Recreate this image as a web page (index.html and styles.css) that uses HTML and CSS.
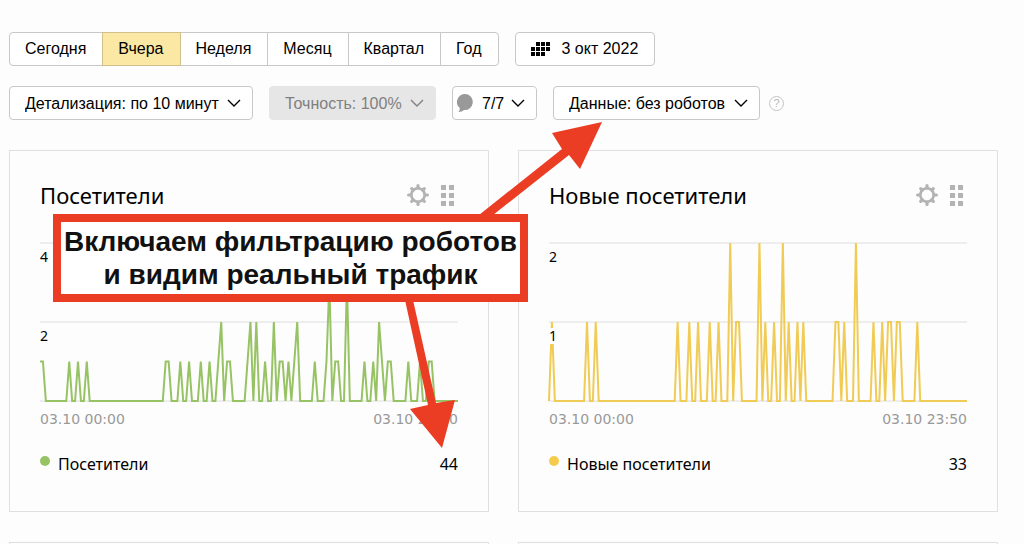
FILE: index.html
```html
<!DOCTYPE html>
<html lang="ru">
  <head>
    <meta charset="UTF-8" />
    <meta name="viewport" content="width=device-width, initial-scale=1.0" />
    <title>Посетители</title>
    <link rel="stylesheet" href="styles.css">
  </head>
  <body>
    <svg class="sprite" width="0" height="0" aria-hidden="true">
      <symbol id="gear" viewBox="0 0 22 22">
        <circle cx="11" cy="11" r="6.7" fill="none" stroke="currentColor" stroke-width="2.6" />
        <path d="M11 1.6V4M11 18v2.400M1.600 11H4M18 11h2.400M4.700 4.700l1.500 1.500M15.800 15.800l1.500 1.500M4.700 17.300l1.500-1.500M15.800 6.200l1.500-1.500" fill="none" stroke="currentColor" stroke-width="3.200" stroke-linecap="round" />
      </symbol>
      <symbol id="grip" viewBox="0 0 13 21">
        <path d="M0 0h5v5H0zM8 0h5v5H8zM0 8h5v5H0zM8 8h5v5H8zM0 16h5v5H0zM8 16h5v5H8z" fill="currentColor" />
      </symbol>
    </svg>

    <main class="page">
      <div class="toolbar">
        <div class="periods">
          <button type="button">Сегодня</button>
          <button type="button" class="active">Вчера</button>
          <button type="button">Неделя</button>
          <button type="button">Месяц</button>
          <button type="button">Квартал</button>
          <button type="button">Год</button>
        </div>
        <button type="button" class="date-btn">
          <svg width="19" height="14" viewBox="0 0 19 14" aria-hidden="true">
            <path d="M5 0h4v4H5zM10 0h4v4h-4zM15 0h4v4h-4zM0 5h4v4H0zM5 5h4v4H5zM10 5h4v4h-4zM15 5h4v4h-4zM0 10h4v4H0zM5 10h4v4H5zM10 10h4v4h-4z" />
          </svg>
          3 окт 2022
        </button>
      </div>

      <div class="toolbar">
        <select class="dropdown" aria-label="Детализация">
          <option>Детализация: по 10 минут</option>
        </select>
        <select class="dropdown" aria-label="Точность" disabled>
          <option>Точность: 100%</option>
        </select>
        <label class="notes">
          <svg width="17" height="18" viewBox="0 0 17 18" aria-hidden="true">
            <path d="M8.500 0a8 8 0 1 1-1.500 16Q5 17.800 1.500 18 3 16.500 2.700 14A8 8 0 0 1 8.500 0z" />
          </svg>
          <select class="dropdown" aria-label="Примечания">
            <option>7/7</option>
          </select>
        </label>
        <select class="dropdown" aria-label="Данные">
          <option>Данные: без роботов</option>
        </select>
        <button type="button" class="help">?</button>
      </div>

      <div class="cards">
        <section class="card">
          <header class="card-header">
            <h2>Посетители</h2>
            <button type="button" class="icon-btn" aria-label="Настройки"><svg width="22" height="22"><use href="#gear" /></svg></button>
            <button type="button" class="icon-btn" aria-label="Переместить"><svg width="13" height="21"><use href="#grip" /></svg></button>
          </header>
          <div class="chart">
            <svg class="plot green" viewBox="0 0 143 4" preserveAspectRatio="none" aria-hidden="true">
              <path class="grid" d="M0 0H143M0 2H143M0 4H143" />
              <polyline points="0,3 1,3 2,4 9,4 10,3 11,4 12,4 13,3 14,4 15,4 16,3 17,4 42,4 43,3 44,3 45,4 47,4 48,3 49,4 50,4 51,3 52,4 54,4 55,3 56,4 57,4 58,3 59,4 60,4 61,3 62,2 63,4 64,3 65,3 66,4 70,4 71,3 72,2 73,4 74,2 75,4 76,4 77,3 78,4 79,4 80,2 81,4 82,3 83,3 84,4 85,3 86,4 87,3 88,2 89,4 93,4 94,3 95,4 97,4 98,3 99,1 100,4 101,3 102,3 103,4 104,4 105,1 106,4 110,4 111,3 112,4 113,4 114,3 115,4 116,2 117,3 118,4 119,3 120,3 121,4 125,4 126,3 127,4 129,4 130,3 131,4 132,4 133,3 134,3 135,4 143,4" />
            </svg>
            <div class="scale"><span>4</span><span>2</span></div>
          </div>
          <div class="axis"><span>03.10 00:00</span><span>03.10 23:50</span></div>
          <div class="legend"><i class="dot green"></i><span>Посетители</span><b>44</b></div>
        </section>

        <section class="card">
          <header class="card-header">
            <h2>Новые посетители</h2>
            <button type="button" class="icon-btn" aria-label="Настройки"><svg width="22" height="22"><use href="#gear" /></svg></button>
            <button type="button" class="icon-btn" aria-label="Переместить"><svg width="13" height="21"><use href="#grip" /></svg></button>
          </header>
          <div class="chart">
            <svg class="plot yellow" viewBox="0 0 143 2" preserveAspectRatio="none" aria-hidden="true">
              <path class="grid" d="M0 0H143M0 1H143M0 2H143" />
              <polyline points="0,2 1,1 2,2 12,2 13,1 14,2 15,2 16,1 17,2 43,2 44,1 45,2 47,2 48,1 49,2 50,2 51,1 52,2 54,2 55,1 56,2 57,2 58,1 59,2 61,2 62,0 63,2 64,1 65,1 66,2 71,2 72,0 73,2 74,1 75,2 76,2 77,1 78,2 79,2 80,0 81,2 82,1 83,2 84,2 85,1 86,2 87,1 88,2 97,2 98,1 99,1 100,2 101,1 102,2 104,2 105,0 106,2 110,2 111,1 112,2 113,2 114,1 115,2 116,1 117,1 118,2 119,1 120,1 121,2 125,2 126,1 127,2 143,2" />
            </svg>
            <div class="scale"><span>2</span><span>1</span></div>
          </div>
          <div class="axis"><span>03.10 00:00</span><span>03.10 23:50</span></div>
          <div class="legend"><i class="dot yellow"></i><span>Новые посетители</span><b>33</b></div>
        </section>

        <section class="card"></section>
        <section class="card"></section>
      </div>
    </main>

    <svg class="arrows" width="620" height="460" viewBox="0 0 620 460" aria-hidden="true">
      <path d="M479 215L562 149 552 133 602 122 580 169 569 155 493 215z" />
      <path d="M405 300L428 405 410 409 442 448 455 400 436 403 413 300z" />
    </svg>
    <p class="callout">Включаем фильтрацию роботов<br />и видим реальный трафик</p>
  </body>
</html>
```
FILE: styles.css
```css
* {
  box-sizing: border-box;
}
body {
  margin: 0;
  height: 100vh;
  overflow: hidden;
  position: relative;
  background-color: #fdfdfd;
  color: #000;
  font-family: "Liberation Sans", Arial, sans-serif;
  font-size: 16px;
}
button,
select {
  font: inherit;
  color: inherit;
}
.sprite {
  position: absolute;
}
.page {
  height: 100%;
  overflow: hidden;
  padding: 32px 26px 0 9px;
}
.toolbar {
  display: flex;
  align-items: center;
  gap: 16px;
  margin-bottom: 20px;
}
.periods {
  display: flex;
}
.periods button,
.date-btn,
.dropdown {
  height: 34px;
  padding: 0 16px 0 15px;
  border: 1px solid #c8c8c8;
  background-color: #fff;
  white-space: nowrap;
}
.periods button + button {
  margin-left: -1px;
}
.periods button:first-child {
  border-radius: 4px 0 0 4px;
}
.periods button:last-child {
  border-radius: 0 4px 4px 0;
}
.periods .active {
  background-color: #fbe8a4;
  border-color: #d0c08a;
  position: relative;
}
.date-btn {
  display: flex;
  align-items: center;
  gap: 12px;
  border-radius: 4px;
}
.dropdown {
  appearance: none;
  padding-right: 33px;
  border-radius: 4px;
  background-image: url("data:image/svg+xml,%3Csvg xmlns='http://www.w3.org/2000/svg' width='14' height='8'%3E%3Cpath d='M1 1l6 6 6-6' fill='none' stroke='black' stroke-width='1.4'/%3E%3C/svg%3E");
  background-repeat: no-repeat;
  background-position: right 11px center;
}
.dropdown:disabled {
  border-color: #e6e6e6;
  background-color: #e6e6e6;
  background-image: url("data:image/svg+xml,%3Csvg xmlns='http://www.w3.org/2000/svg' width='14' height='8'%3E%3Cpath d='M1 1l6 6 6-6' fill='none' stroke='gray' stroke-width='1.4'/%3E%3C/svg%3E");
  color: #808080;
  opacity: 1;
}
.notes {
  display: flex;
  align-items: center;
  height: 34px;
  padding-left: 4px;
  border: 1px solid #c8c8c8;
  border-radius: 4px;
  background-color: #fff;
}
.notes svg {
  fill: #999;
}
.notes .dropdown {
  height: 32px;
  padding-right: 31px;
  padding-left: 8px;
  border: 0;
}
.help {
  width: 15px;
  height: 15px;
  margin-left: -7px;
  padding: 0;
  border: 1px solid #c4c4c4;
  border-radius: 50%;
  background: none;
  color: #b8b8b8;
  font-size: 11px;
  line-height: 13px;
}
.cards {
  display: grid;
  grid-template-columns: 1fr 1fr;
  gap: 30px 29px;
  padding-top: 10px;
  font-family: "Noto Sans", sans-serif;
}
.card {
  min-height: 120px;
  padding: 28px 30px 36px;
  border: 1px solid #e0e0e0;
}
.card-header {
  display: flex;
  align-items: center;
  height: 32px;
  margin-bottom: 32px;
}
.card-header h2 {
  flex: 1;
  margin: 0;
  font-size: 22px;
  font-weight: normal;
}
.icon-btn {
  display: flex;
  margin-right: 4px;
  margin-left: 8px;
  padding: 0;
  border: 0;
  background: none;
  color: #b3b3b3;
}
.chart {
  display: grid;
  height: 158px;
}
.plot,
.scale {
  grid-area: 1 / 1;
  width: 100%;
  height: 158px;
}
.plot {
  overflow: visible;
}
.plot path,
.plot polyline {
  fill: none;
  vector-effect: non-scaling-stroke;
}
.plot .grid {
  stroke: #dedede;
  stroke-width: 1;
}
.plot polyline {
  stroke-width: 2;
}
.plot.green polyline {
  stroke: #97c365;
}
.plot.yellow polyline {
  stroke: #f0cb55;
}
.scale {
  display: grid;
  grid-template-rows: 1fr 1fr;
  justify-items: start;
  font-size: 14px;
  line-height: 16px;
}
.scale span {
  height: 16px;
  margin-top: 6px;
  background-color: #fdfdfd;
}
.axis {
  display: flex;
  justify-content: space-between;
  margin-top: 8px;
  color: #999;
  font-family: "DejaVu Sans", sans-serif;
  font-size: 14px;
  line-height: 20px;
}
.legend {
  display: flex;
  align-items: center;
  margin-top: 24px;
  font-size: 16px;
  line-height: 22px;
}
.legend span {
  flex: 1;
}
.legend b {
  font-weight: normal;
}
.dot {
  width: 10px;
  height: 10px;
  margin-right: 8px;
  margin-bottom: 6px;
  border-radius: 50%;
}
.dot.green {
  background-color: #97c365;
}
.dot.yellow {
  background-color: #f5cb4b;
}
.arrows {
  position: absolute;
  top: 0;
  left: 0;
  fill: #eb3d24;
  pointer-events: none;
}
.callout {
  position: absolute;
  top: 214px;
  left: 53px;
  margin: 0;
  padding: 3px 3px;
  border: 8px solid #eb3d24;
  background-color: #fff;
  color: #111;
  font-size: 28px;
  font-weight: bold;
  line-height: 33px;
  text-align: center;
  white-space: nowrap;
}
```
